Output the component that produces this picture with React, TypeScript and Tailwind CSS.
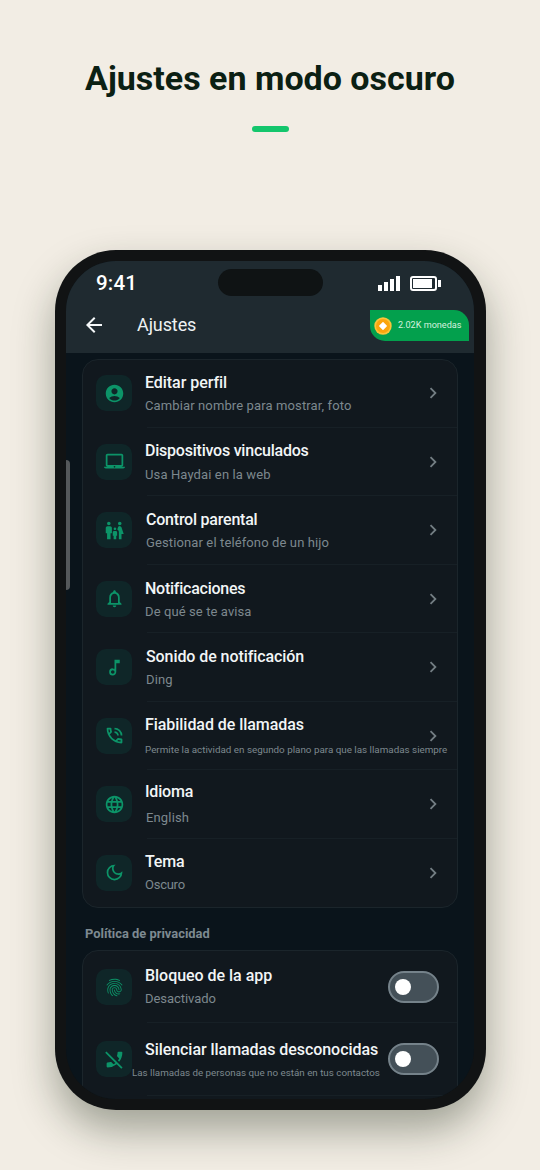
import type { IconType } from "react-icons";
import {
    MdAccountCircle,
    MdArrowBack,
    MdChevronRight,
    MdFamilyRestroom,
    MdFingerprint,
    MdLanguage,
    MdLaptopMac,
    MdNotificationsNone,
    MdOutlineDarkMode,
    MdOutlineMusicNote,
    MdOutlinePhoneInTalk,
    MdPhoneDisabled,
} from "react-icons/md";

type Item = {
    icon: IconType;
    title: string;
    sub: string;
    titleClass: string;
    subClass: string;
};

const settings: Item[] = [
    { icon: MdAccountCircle, title: "Editar perfil", sub: "Cambiar nombre para mostrar, foto", titleClass: "mt-[14px] tracking-[-0.05px]", subClass: "mt-[3px] text-[13px] tracking-[0.12px]" },
    { icon: MdLaptopMac, title: "Dispositivos vinculados", sub: "Usa Haydai en la web", titleClass: "mt-[13px] tracking-[-0.23px]", subClass: "mt-[4px] text-[13px] tracking-[0.12px]" },
    { icon: MdFamilyRestroom, title: "Control parental", sub: "Gestionar el teléfono de un hijo", titleClass: "mt-[14px] pl-px tracking-[-0.22px]", subClass: "mt-[3px] pl-px text-[13px] tracking-[0.12px]" },
    { icon: MdNotificationsNone, title: "Notificaciones", sub: "De qué se te avisa", titleClass: "mt-[14px] tracking-[-0.25px]", subClass: "mt-[3px] text-[13px] tracking-[0.1px]" },
    { icon: MdOutlineMusicNote, title: "Sonido de notificación", sub: "Ding", titleClass: "mt-[14px] pl-px tracking-[-0.08px]", subClass: "mt-[3px] pl-px text-[13px] tracking-[0.1px]" },
    { icon: MdOutlinePhoneInTalk, title: "Fiabilidad de llamadas", sub: "Permite la actividad en segundo plano para que las llamadas siempre", titleClass: "mt-[13px] tracking-[-0.05px]", subClass: "mt-[5px] text-[9.83px]" },
    { icon: MdLanguage, title: "Idioma", sub: "English", titleClass: "mt-[12px] tracking-[-0.2px]", subClass: "mt-[6px] pl-px text-[13px] tracking-[0.15px]" },
    { icon: MdOutlineDarkMode, title: "Tema", sub: "Oscuro", titleClass: "mt-[13px] tracking-[-0.2px]", subClass: "mt-[3px] text-[13px] tracking-[-0.25px]" },
];

const privacy: Item[] = [
    { icon: MdFingerprint, title: "Bloqueo de la app", sub: "Desactivado", titleClass: "mt-[15px] tracking-[-0.03px]", subClass: "mt-[3px] text-[13px] tracking-[-0.05px]" },
    { icon: MdPhoneDisabled, title: "Silenciar llamadas desconocidas", sub: "Las llamadas de personas que no están en tus contactos", titleClass: "mt-[17px] tracking-[-0.05px]", subClass: "mt-[3px] -ml-[13px] text-[9.8px]" },
];

function IconTile({ icon: Icon }: { icon: IconType }) {
    return (
        <div className="flex h-9 w-9 shrink-0 items-center justify-center rounded-[10px] bg-[#0f2628] text-[#0c9468]">
            <Icon size={21} />
        </div>
    );
}

function RowText({ item }: { item: Item }) {
    return (
        <div className="h-full min-w-0 flex-1 whitespace-nowrap">
            <p className={`text-[16px] leading-[20px] font-medium text-[#f2f5f6] ${item.titleClass}`}>{item.title}</p>
            <p className={`leading-[20px] text-[#7d888e] ${item.subClass}`}>{item.sub}</p>
        </div>
    );
}

function Toggle() {
    return (
        <div className="flex h-8 w-[51px] shrink-0 items-center rounded-full border-2 border-[#75828a] bg-[#445058] pl-[5px]">
            <div className="h-4 w-4 rounded-full bg-white"></div>
        </div>
    );
}

function StatusBar() {
    return (
        <div className="flex h-[44px] items-center pl-[30px] pr-[33px] text-white">
            <span className="w-[122px] text-[20.5px] font-medium tracking-[0.2px]">9:41</span>
            <div className="-mt-[2px] h-[27px] w-[105px] rounded-full bg-[#0f1314]"></div>
            <div className="ml-auto flex items-center gap-[10px]">
                <div className="flex h-[15px] items-end gap-[2px]">
                    <div className="h-[6px] w-[4px] bg-white"></div>
                    <div className="h-[9px] w-[4px] bg-white"></div>
                    <div className="h-[12px] w-[4px] bg-white"></div>
                    <div className="h-[15px] w-[4px] bg-white"></div>
                </div>
                <div className="flex items-center gap-px">
                    <div className="h-[15px] w-[27px] rounded-[3px] border-2 border-white p-px">
                        <div className="h-full w-[19px] bg-white"></div>
                    </div>
                    <div className="h-[7px] w-[3px] bg-white"></div>
                </div>
            </div>
        </div>
    );
}

function Coin() {
    return (
        <svg width="18" height="18" viewBox="0 0 18 18">
            <circle cx="9" cy="9" r="8.7" fill="#fbc43a" />
            <circle cx="9" cy="9" r="7" fill="#fba50d" />
            <path d="M9 5.8 12.2 9 9 12.2 5.8 9Z" fill="#fff" stroke="#fff" strokeWidth="1.4" strokeLinejoin="round" />
        </svg>
    );
}

function TopBar() {
    return (
        <div className="flex h-[48px] items-start pl-[16px] pr-[5px]">
            <MdArrowBack size={24} className="mt-[8px] text-[#f5f8f9]" />
            <h2 className="mt-[8px] ml-[31px] text-[18px] leading-[24px] tracking-[-0.1px] text-[#eef2f3]">Ajustes</h2>
            <div className="mt-[5px] ml-auto flex h-[31px] w-[99px] items-center rounded-tr-[15px] rounded-bl-[15px] bg-[#03a04d] pl-[4px]">
                <Coin />
                <span className="ml-[6px] text-[9.1px] whitespace-nowrap text-[#d3f1df]">2.02K monedas</span>
            </div>
        </div>
    );
}

export default function App() {
    return (
        <div className="flex h-[1170px] w-[540px] flex-col items-center overflow-hidden bg-[#f2ede4] font-[Roboto,sans-serif]">
            <h1 className="mt-[56px] text-[34px] leading-[44px] font-bold text-[#0b2013]">Ajustes en modo oscuro</h1>
            <div className="mt-[26px] ml-px h-[6px] w-[37px] rounded-full bg-[#14c66c]"></div>

            <div className="relative mt-[118px] ml-px h-[860px] w-[431px] shrink-0 rounded-[61px] bg-[#111314] py-[11px] pr-[12px] pl-[11px] shadow-[0_20px_40px_rgba(25,40,20,0.38)]">
                <div className="flex h-full flex-col overflow-hidden rounded-[50px] bg-[#0a141b]">
                    <div className="h-[92px] shrink-0 bg-[#1f2a30]">
                        <StatusBar />
                        <TopBar />
                    </div>

                    <div className="mt-[6px] ml-[16px] h-[549px] w-[376px] shrink-0 rounded-[16px] border border-[#1b252b] bg-[#11181e]">
                        <div className="-mt-[0.8px] flex flex-col">
                            {settings.map((item, i) => (
                                <div key={item.title} className="relative flex h-[68.5px] items-center pr-[13px] pl-[13px]">
                                    <IconTile icon={item.icon} />
                                    <div className="w-[13px] shrink-0"></div>
                                    <RowText item={item} />
                                    <MdChevronRight size={22} className="shrink-0 text-[#737d83]" />
                                    {i < settings.length - 1 && <div className="absolute right-0 bottom-0 left-[64px] h-px bg-[#172026]"></div>}
                                </div>
                            ))}
                        </div>
                    </div>

                    <h3 className="mt-[16px] ml-[19px] text-[12.9px] leading-[20px] font-bold text-[#7d8a91]">Política de privacidad</h3>

                    <div className="mt-[6px] ml-[16px] flex h-[160px] w-[376px] shrink-0 flex-col rounded-t-[16px] border border-[#1b252b] bg-[#11181e]">
                        {privacy.map((item) => (
                            <div key={item.title} className="relative flex h-[72.3px] shrink-0 items-center pr-[18px] pl-[13px]">
                                <IconTile icon={item.icon} />
                                <div className="w-[13px] shrink-0"></div>
                                <RowText item={item} />
                                <Toggle />
                                <div className="absolute right-0 bottom-0 left-[64px] h-px bg-[#172026]"></div>
                            </div>
                        ))}
                    </div>
                </div>
                {/* scroll handle on the left edge */}
                <div className="absolute top-[210px] left-[11px] h-[130px] w-[4px] rounded-r-[4px] bg-[#55585a]"></div>
            </div>
        </div>
    );
}
